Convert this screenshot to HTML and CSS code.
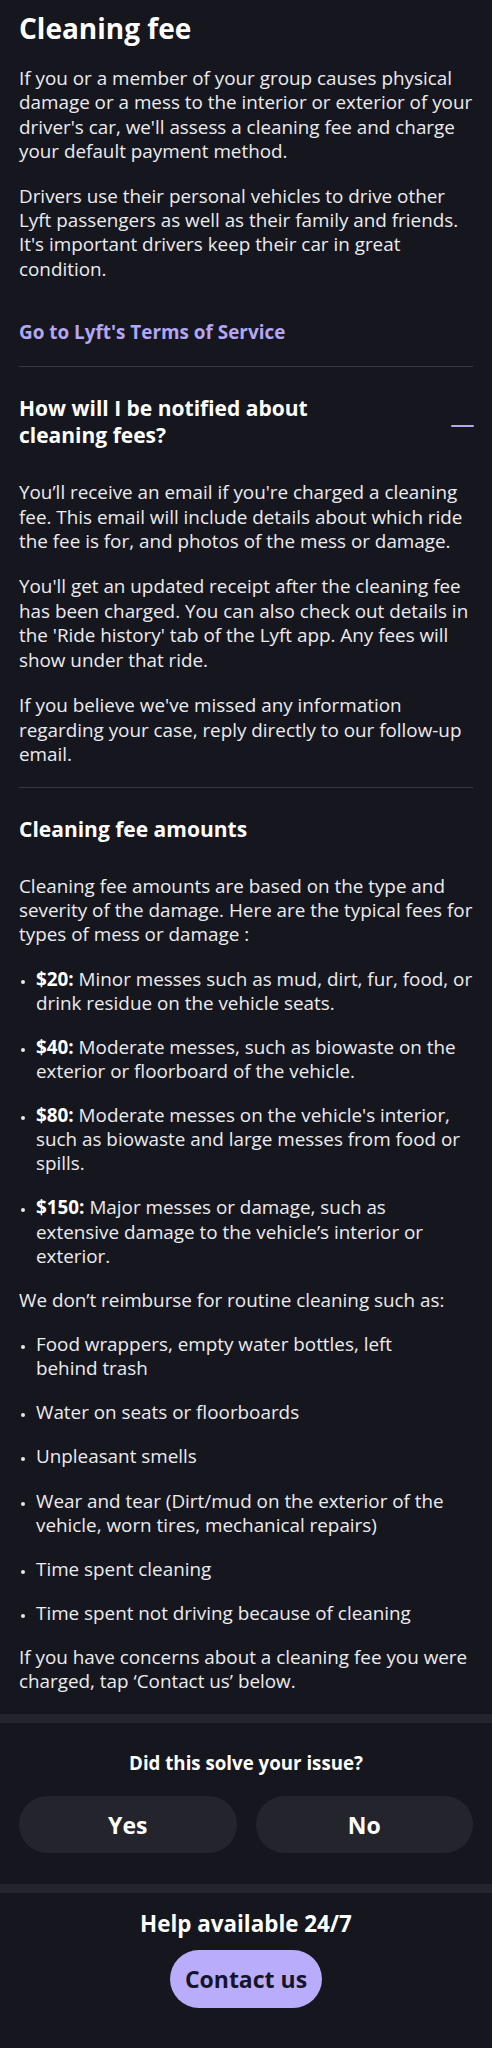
FILE: index.html
```html
<!DOCTYPE html>
<html lang="en">
<head>
<meta charset="utf-8">
<title>Cleaning fee</title>
<link rel="stylesheet" href="styles.css">
</head>
<body>
<main class="article">
  <h1 class="title">Cleaning fee</h1>
  <p class="para">If you or a member of your group causes physical damage or a mess to the interior or exterior of your driver's car, we'll assess a cleaning fee and charge your default payment method.</p>
  <p class="para">Drivers use their personal vehicles to drive other Lyft passengers as well as their family and friends. It's important drivers keep their car in great condition.</p>
  <a class="link" href="#">Go to Lyft's Terms of Service</a>
  <hr class="divider">

  <section class="faq faq-open">
    <div class="faq-head">
      <h2 class="faq-title">How will I be notified about cleaning fees?</h2>
      <span class="minus"></span>
    </div>
    <p class="para">You’ll receive an email if you're charged a cleaning fee. This email will include details about which ride the fee is for, and photos of the mess or damage.</p>
    <p class="para">You'll get an updated receipt after the cleaning fee has been charged. You can also check out details in the 'Ride history' tab of the Lyft app. Any fees will show under that ride.</p>
    <p class="para">If you believe we've missed any information regarding your case, reply directly to our follow-up email.</p>
  </section>
  <hr class="divider">

  <section class="faq">
    <h2 class="faq-title">Cleaning fee amounts</h2>
    <p class="para">Cleaning fee amounts are based on the type and severity of the damage. Here are the typical fees for types of mess or damage :</p>
    <ul class="list">
      <li><span><b>$20:</b> Minor messes such as mud, dirt, fur, food, or drink residue on the vehicle seats.</span></li>
      <li><span><b>$40:</b> Moderate messes, such as biowaste on the exterior or floorboard of the vehicle.</span></li>
      <li><span><b>$80:</b> Moderate messes on the vehicle's interior, such as biowaste and large messes from food or spills.</span></li>
      <li><span><b>$150:</b> Major messes or damage, such as extensive damage to the vehicle’s interior or exterior.</span></li>
    </ul>
    <p class="para">We don’t reimburse for routine cleaning such as:</p>
    <ul class="list">
      <li><span>Food wrappers, empty water bottles, left<br>behind trash</span></li>
      <li><span>Water on seats or floorboards</span></li>
      <li><span>Unpleasant smells</span></li>
      <li><span>Wear and tear (Dirt/mud on the exterior of the vehicle, worn tires, mechanical repairs)</span></li>
      <li><span>Time spent cleaning</span></li>
      <li><span>Time spent not driving because of cleaning</span></li>
    </ul>
    <p class="para">If you have concerns about a cleaning fee you were charged, tap ‘Contact us’ below.</p>
  </section>
</main>

<div class="band"></div>
<section class="feedback">
  <h3 class="feedback-q">Did this solve your issue?</h3>
  <div class="choices">
    <button class="choice">Yes</button>
    <button class="choice">No</button>
  </div>
</section>
<div class="band"></div>
<section class="help">
  <h3 class="help-title">Help available 24/7</h3>
  <button class="contact">Contact us</button>
</section>
</body>
</html>
```
FILE: styles.css
```css
html, body {
  margin: 0;
  padding: 0;
  background: #16161e;
}
body {
  font-family: "Open Sans", "Noto Sans", sans-serif;
  color: #ececf0;
  width: 492px;
}
.article {
  padding: 11px 19px 20.5px;
}
.title {
  margin: 0;
  font-size: 28px;
  line-height: 34px;
  font-weight: 700;
  color: #ffffff;
}
.para {
  margin: 20px 0 0;
  font-size: 18.85px;
  line-height: 24.4px;
}
.title + .para {
  margin-top: 21px;
}
.link {
  display: block;
  margin-top: 39px;
  font-size: 18.9px;
  line-height: 24.4px;
  font-weight: 700;
  color: #b3a6f2;
  text-decoration: none;
}
.divider {
  margin: 21px 0 0;
  border: 0;
  height: 1px;
  background: #383843;
}
.faq {
  padding-top: 28px;
}
.faq-head {
  display: flex;
  align-items: center;
  justify-content: space-between;
}
.faq-title {
  margin: 0;
  max-width: 340px;
  font-size: 21px;
  line-height: 27.3px;
  font-weight: 700;
  color: #ffffff;
}
.minus {
  width: 23px;
  height: 2px;
  margin: 8px -1px 0 0;
  border-radius: 1px;
  background: #b3a6f2;
  flex-shrink: 0;
}
.faq-head + .para,
.faq-title + .para {
  margin-top: 30px;
}
.faq-open .faq-head + .para {
  margin-top: 31px;
}
.faq-open .para + .para {
  margin-top: 21px;
}
.list {
  list-style: none;
  margin: 20px 0 0;
  padding: 0;
}
.list li {
  display: flex;
  font-size: 18.85px;
  line-height: 24.1px;
}
.list li + li {
  margin-top: 20px;
}
.list li::before {
  content: "";
  flex-shrink: 0;
  width: 4px;
  height: 4px;
  border-radius: 50%;
  background: #e6e6ea;
  margin: 13px 11px 0 2px;
}
.list b {
  font-weight: 700;
  color: #ffffff;
}
.band {
  height: 9px;
  background: #24242d;
}
.feedback {
  padding: 28px 19px 31px;
  text-align: center;
}
.feedback-q {
  margin: 0;
  font-size: 18.7px;
  line-height: 24px;
  font-weight: 700;
  color: #ffffff;
}
.choices {
  display: flex;
  gap: 19px;
  margin-top: 21px;
}
.choice {
  flex: 1;
  height: 57px;
  border: 0;
  border-radius: 29px;
  background: #24242d;
  color: #ffffff;
  font-family: inherit;
  font-size: 23px;
  font-weight: 700;
}
.help {
  padding: 17px 19px 38px;
  display: flex;
  flex-direction: column;
  align-items: center;
}
.help-title {
  margin: 0;
  font-size: 22.4px;
  line-height: 28px;
  font-weight: 700;
  color: #ffffff;
}
.contact {
  margin-top: 12px;
  width: 152px;
  height: 58px;
  border: 0;
  border-radius: 29px;
  background: #b9acfa;
  color: #15152a;
  font-family: inherit;
  font-size: 23px;
  font-weight: 700;
}
```
